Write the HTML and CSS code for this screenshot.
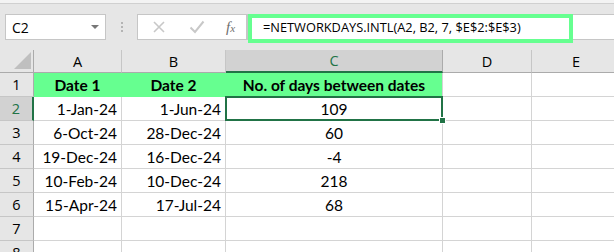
FILE: index.html
```html
<!DOCTYPE html>
<html lang="en">
<head>
    <meta charset="UTF-8">
    <meta name="viewport" content="width=device-width, initial-scale=1.0">
    <title>NETWORKDAYS.INTL</title>
    <link rel="stylesheet" href="styles.css">
</head>
<body>
    <div class="topstrip"></div>
    <div class="toolbar">
        <div class="namebox">
            <span>C2</span>
            <span class="caret"></span>
        </div>
        <div class="grip"><i></i><i></i><i></i></div>
        <div class="fxbtns">
            <svg class="ico" width="14" height="14" viewBox="0 0 14 14">
                <path d="M2 2 L12 12 M12 2 L2 12" stroke="#c8c8c8" stroke-width="1.6" fill="none"/>
            </svg>
            <svg class="ico" width="16" height="14" viewBox="0 0 16 14">
                <path d="M1.5 7.5 L6 12 L14.5 1.5" stroke="#c8c8c8" stroke-width="2" fill="none"/>
            </svg>
            <span class="fx">f<sub>x</sub></span>
        </div>
        <div class="formula">
            <span class="ftext">=NETWORKDAYS.INTL(A2, B2, 7, $E$2:$E$3)</span>
            <div class="hl"></div>
        </div>
    </div>

    <div class="sheet">
        <!-- header row -->
        <div class="corner"><span class="tri"></span></div>
        <div class="colhd">A</div>
        <div class="colhd">B</div>
        <div class="colhd active">C</div>
        <div class="colhd">D</div>
        <div class="colhd">E</div>

        <div class="rowhd">1</div>
        <div class="cell green b">Date 1</div>
        <div class="cell green b">Date 2</div>
        <div class="cell green b last">No. of days between dates</div>
        <div class="cell"></div>
        <div class="cell"></div>

        <div class="rowhd active">2</div>
        <div class="cell r">1-Jan-24</div>
        <div class="cell r">1-Jun-24</div>
        <div class="cell c sel">109<span class="selbox"></span><span class="handle"></span></div>
        <div class="cell"></div>
        <div class="cell"></div>

        <div class="rowhd">3</div>
        <div class="cell r">6-Oct-24</div>
        <div class="cell r">28-Dec-24</div>
        <div class="cell c">60</div>
        <div class="cell"></div>
        <div class="cell"></div>

        <div class="rowhd">4</div>
        <div class="cell r">19-Dec-24</div>
        <div class="cell r">16-Dec-24</div>
        <div class="cell c">-4</div>
        <div class="cell"></div>
        <div class="cell"></div>

        <div class="rowhd">5</div>
        <div class="cell r">10-Feb-24</div>
        <div class="cell r">10-Dec-24</div>
        <div class="cell c">218</div>
        <div class="cell"></div>
        <div class="cell"></div>

        <div class="rowhd">6</div>
        <div class="cell r">15-Apr-24</div>
        <div class="cell r">17-Jul-24</div>
        <div class="cell c">68</div>
        <div class="cell"></div>
        <div class="cell"></div>

        <div class="rowhd">7</div>
        <div class="cell"></div>
        <div class="cell"></div>
        <div class="cell"></div>
        <div class="cell"></div>
        <div class="cell"></div>

        <div class="rowhd last">8</div>
        <div class="cell"></div>
        <div class="cell"></div>
        <div class="cell"></div>
        <div class="cell"></div>
        <div class="cell"></div>
    </div>
</body>
</html>
```

FILE: styles.css
```css
*{
    box-sizing: border-box;
}
body{
    margin: 0;
    width: 614px;
    height: 252px;
    overflow: hidden;
    background: #e6e6e6;
    font-family: "Open Sans", "Noto Sans", sans-serif;
    color: #000;
}
.topstrip{
    height: 4px;
    background: #f3f3f3;
    border-bottom: 1px solid #d0d0d0;
}
/* toolbar */
.toolbar{
    display: flex;
    align-items: flex-start;
    height: 46px;
    padding: 10px 0 0 5px;
}
.namebox{
    width: 101px;
    height: 26px;
    background: #fff;
    border: 1px solid #c6c6c6;
    display: flex;
    align-items: center;
    justify-content: space-between;
    padding: 0 6px 0 6px;
    font-size: 14px;
}
.caret{
    width: 0;
    height: 0;
    border-left: 4px solid transparent;
    border-right: 4px solid transparent;
    border-top: 4px solid #777;
}
.grip{
    width: 31px;
    height: 26px;
    display: flex;
    flex-direction: column;
    align-items: center;
    justify-content: center;
    gap: 2px;
}
.grip i{
    display: block;
    width: 2px;
    height: 2px;
    background: #b4b4b4;
}
.fxbtns{
    width: 110px;
    height: 26px;
    background: #fff;
    border: 1px solid #c6c6c6;
    display: flex;
    align-items: center;
    padding: 0 0 0 14px;
    gap: 23px;
}
.fx{
    font-family: "Liberation Serif", serif;
    font-style: italic;
    font-size: 15px;
    color: #6e6e6e;
    margin-left: -2px;
}
.fx sub{
    font-size: 11px;
    vertical-align: 0;
}
.formula{
    position: relative;
    flex: 1;
    height: 26px;
    background: #fff;
    border: 1px solid #c6c6c6;
    border-right: none;
    padding: 0 0 0 15px;
    font-size: 12.8px;
    line-height: 24px;
}
.hl{
    position: absolute;
    left: 0;
    top: -1px;
    width: 325px;
    height: 29px;
    border: 4px solid #66ff90;
}
/* sheet grid */
.sheet{
    display: grid;
    grid-template-columns: 34px 88px 104px 217px 89px 89px;
    grid-template-rows: 23px repeat(8, 24px);
    background: #fff;
    font-family: "Lato", "Open Sans", sans-serif;
    font-size: 15.5px;
}
.corner{
    background: #e6e6e6;
    border-right: 1px solid #ababab;
    border-bottom: 1px solid #ababab;
    position: relative;
}
.tri{
    position: absolute;
    right: 2px;
    bottom: 3px;
    width: 0;
    height: 0;
    border-left: 17px solid transparent;
    border-bottom: 17px solid #bfbfbf;
}
.colhd{
    background: #e6e6e6;
    border-right: 1px solid #c6c6c6;
    border-bottom: 1px solid #ababab;
    font-family: "Open Sans", sans-serif;
    font-size: 14.5px;
    display: flex;
    align-items: center;
    justify-content: center;
}
.colhd.active{
    background: #d2d2d2;
    color: #217346;
    border-right-color: #ababab;
    border-bottom: 2px solid #217346;
}
.rowhd{
    background: #e6e6e6;
    border-right: 1px solid #ababab;
    border-bottom: 1px solid #c6c6c6;
    font-family: "Open Sans", sans-serif;
    font-size: 14.5px;
    display: flex;
    align-items: center;
    justify-content: center;
}
.rowhd.last{
    align-items: flex-start;
    padding-top: 2px;
}
.rowhd.active{
    background: #d2d2d2;
    color: #217346;
    border-right: 2px solid #217346;
}
.cell{
    border-right: 1px solid #d4d4d4;
    border-bottom: 1px solid #d4d4d4;
    display: flex;
    align-items: center;
    padding: 0 4px;
    white-space: nowrap;
}
.r{
    justify-content: flex-end;
}
.c{
    justify-content: center;
}
.b{
    font-weight: bold;
    justify-content: center;
}
.green{
    background: #66ff90;
    border-color: #66ff90;
}
.green.last{
    border-right-color: #d4d4d4;
}
.sel{
    position: relative;
}
.selbox{
    position: absolute;
    left: -1px;
    top: -1px;
    right: -1px;
    bottom: -1px;
    border: 2px solid #217346;
}
.handle{
    position: absolute;
    right: -4px;
    bottom: -4px;
    width: 7px;
    height: 7px;
    background: #217346;
    border: 1px solid #fff;
}
```
